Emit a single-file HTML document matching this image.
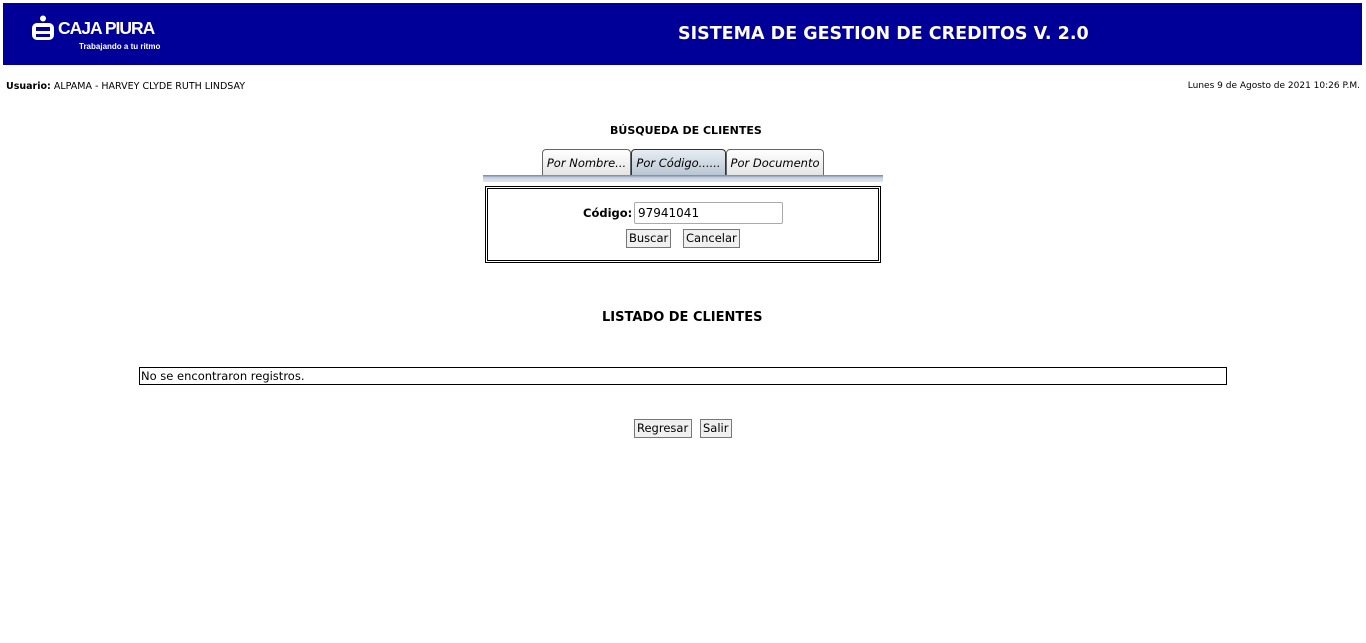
<!DOCTYPE html>
<html><head><meta charset="utf-8"><style>
body{margin:0;width:1366px;height:643px;background:#fff;font-family:"DejaVu Sans","Liberation Sans",sans-serif;position:relative;overflow:hidden}
.a{position:absolute}
.hdr{left:3px;top:3px;width:1359px;height:62px;background:#000099}
.t{font-size:12px;color:#000;white-space:nowrap}
.tab{position:absolute;top:149px;height:26px;border:1px solid #666;border-bottom:none;border-radius:4px 4px 0 0;background:linear-gradient(#fff,#e4e4e4);font-style:italic;font-size:11.5px;line-height:26px;text-align:center;box-sizing:border-box;white-space:nowrap}
.btn{position:absolute;border:1px solid #777;background:#f0f0f0;font-size:12px;line-height:16px;padding:0 2px;box-sizing:border-box;height:19px}
</style></head><body>
<div class="a hdr"></div>
<svg class="a" style="left:30px;top:15px" width="30" height="28" viewBox="0 0 30 28">
<circle cx="13" cy="3.5" r="3" fill="#fff"/>
<rect x="2" y="8" width="22" height="17" rx="5" fill="#fff"/>
<rect x="6" y="12" width="14" height="4" fill="#000099"/>
<rect x="6" y="19" width="14" height="3" fill="#000099"/>
</svg>
<div class="a" style="left:58px;top:18px;color:#fff;font:bold 17.5px 'Liberation Sans',sans-serif;letter-spacing:-1px">CAJA PIURA</div>
<div class="a" style="left:79px;top:42px;color:#fff;font:bold 8px 'Liberation Sans',sans-serif">Trabajando a tu ritmo</div>
<div class="a" style="left:678px;top:24px;color:#fff;font:bold 17.5px 'DejaVu Sans',sans-serif;letter-spacing:0px;white-space:nowrap">SISTEMA DE GESTION DE CREDITOS V. 2.0</div>
<div class="a" style="left:6px;top:81px;font-size:9.5px"><b>Usuario:</b> ALPAMA - HARVEY CLYDE RUTH LINDSAY</div>
<div class="a" style="right:6px;top:81px;font-size:9px">Lunes 9 de Agosto de 2021 10:26 P.M.</div>
<div class="a t" style="left:610px;top:124px;font-weight:bold;font-size:11px">BÚSQUEDA DE CLIENTES</div>
<div class="tab" style="left:542px;width:89px">Por Nombre...</div>
<div class="tab" style="left:631px;width:95px;background:linear-gradient(#e8edf3,#b9c6d4);border-color:#333">Por Código......</div>
<div class="tab" style="left:726px;width:98px">Por Documento</div>
<div class="a" style="left:483px;top:175px;width:400px;height:7px;background:linear-gradient(#6f86a5,#c8d3e0 40%,#dfe6ee)"></div>
<div class="a" style="left:485px;top:186px;width:396px;height:77px;border:3px double #000;box-sizing:border-box"></div>
<div class="a t" style="left:583px;top:206px;font-weight:bold;font-size:11.5px">Código:</div>
<div class="a" style="left:634px;top:202px;width:149px;height:22px;border:1px solid #aaa;border-radius:2px;box-sizing:border-box;font-size:12px;line-height:20px;padding-left:3px">97941041</div>
<div class="btn" style="left:626px;top:229px;width:45px;font-size:11.5px">Buscar</div>
<div class="btn" style="left:683px;top:229px;width:57px;font-size:11.5px">Cancelar</div>
<div class="a t" style="left:602px;top:310px;font-weight:bold;font-size:13px">LISTADO DE CLIENTES</div>
<div class="a t" style="left:139px;top:367px;width:1088px;height:18px;border:1px solid #000;box-sizing:border-box;line-height:16px;padding-left:1px;font-size:11.5px">No se encontraron registros.</div>
<div class="btn" style="left:634px;top:419px;width:58px;font-size:11.5px">Regresar</div>
<div class="btn" style="left:700px;top:419px;width:32px;font-size:11.5px">Salir</div>
</body></html>
